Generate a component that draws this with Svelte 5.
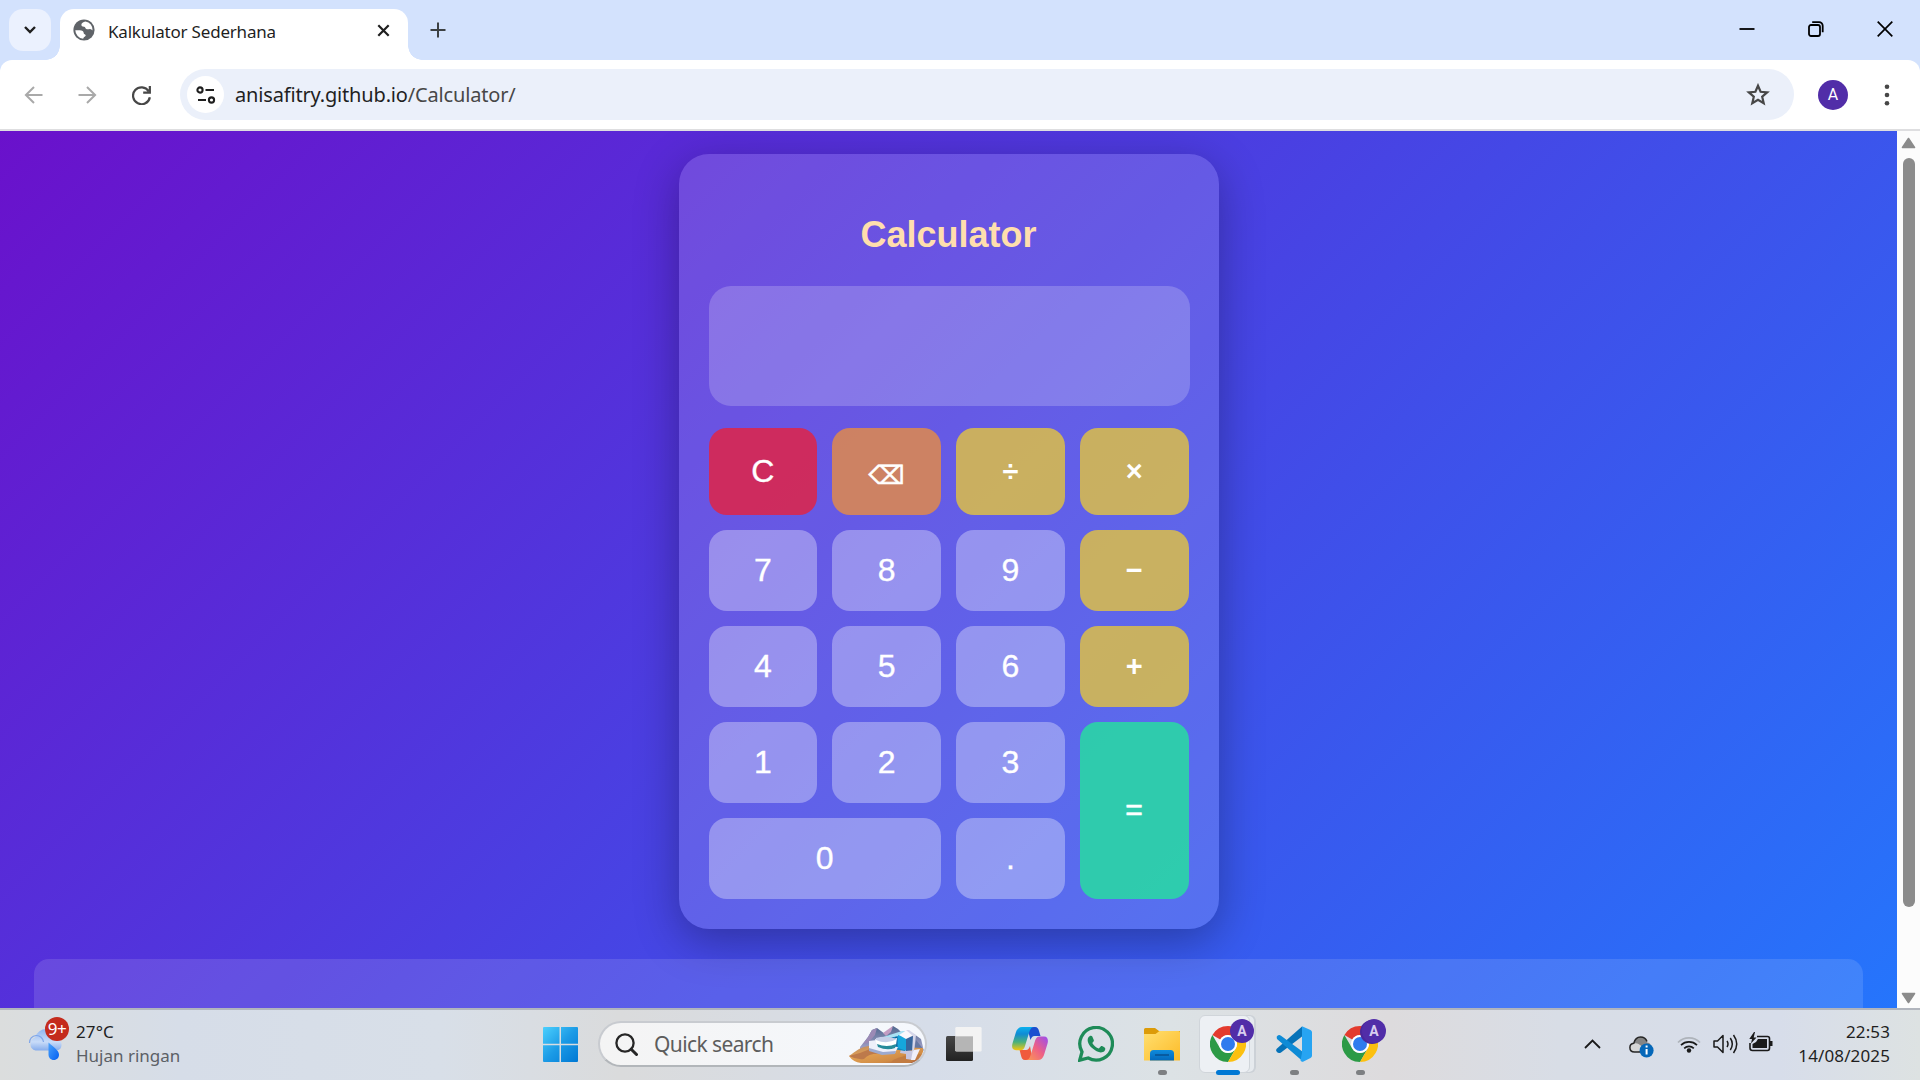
<script>
  const keys = [
    { label: 'C', kind: 'clear' },
    { label: '⌫', kind: 'erase' },
    { label: '÷', kind: 'op' },
    { label: '×', kind: 'op' },
    { label: '7' }, { label: '8' }, { label: '9' },
    { label: '−', kind: 'op' },
    { label: '4' }, { label: '5' }, { label: '6' },
    { label: '+', kind: 'op' },
    { label: '1' }, { label: '2' }, { label: '3' },
    { label: '=', kind: 'equals' },
    { label: '0', kind: 'zero' },
    { label: '.' }
  ];
</script>

{#snippet chrome()}
  <svg class="icon36" viewBox="0 0 36 36">
    <path d="M18 0A18 18 0 0 1 33.6 9H18A9 9 0 0 0 10.2 13.5L2.4 9A18 18 0 0 1 18 0Z" fill="#e33b2e" />
    <path d="M2.4 9A18 18 0 0 0 18 36L25.8 22.5A9 9 0 0 1 10.2 22.5Z" fill="#2c9a46" />
    <path d="M33.6 9A18 18 0 0 1 18 36L25.8 22.5A9 9 0 0 0 25.8 13.5L18 9Z" fill="#fcc010" />
    <circle cx="18" cy="18" r="9" fill="#fff" />
    <circle cx="18" cy="18" r="7" fill="#2f7bee" />
  </svg>
{/snippet}

<div class="screen">
  <header class="tabstrip">
    <div class="search-tabs">
      <svg width="14" height="10" viewBox="0 0 14 10"><path d="M2 2l5 5 5-5" fill="none" stroke="#1f1f1f" stroke-width="2.4" /></svg>
    </div>
    <div class="tab">
      <svg class="globe" width="22" height="22" viewBox="0 0 22 22">
        <circle cx="11" cy="11" r="10.6" fill="#5f6368" />
        <path d="M12.5 2.4C10 2.8 8.600 4 8.400 5.600c-.2 1.700 1 2 2.600 2.100 1.500.1 1.200 1.600 2.300 2.300 1.500.9 2.900-.2 4.300.2 1 .3 1.500.7 2 1.300A8.700 8.700 0 0 0 12.500 2.400Z" fill="#fff" />
        <path d="M2.300 11.200h4.500c2.400 0 4 1.200 4 3.200 0 1 1.900.6 1.900 1.900 0 1.500-2 1.200-2.500 3.400A8.800 8.800 0 0 1 2.300 11.200Z" fill="#fff" />
      </svg>
      <span class="tab-title">Kalkulator Sederhana</span>
      <svg class="tab-close" width="13" height="13" viewBox="0 0 13 13"><path d="M1.300 1.300l10.400 10.400M11.700 1.300L1.300 11.700" stroke="#1f1f1f" stroke-width="2.200" /></svg>
    </div>
    <svg class="plus" width="16" height="16" viewBox="0 0 16 16"><path d="M8 .5v15M.5 8h15" stroke="#3c4043" stroke-width="2" /></svg>
    <div class="window-controls">
      <svg width="16" height="16" viewBox="0 0 16 16"><path d="M.5 8h15" stroke="#000" stroke-width="1.800" /></svg>
      <svg width="16" height="16" viewBox="0 0 16 16"><rect x="1" y="4" width="11" height="11" rx="2" fill="none" stroke="#000" stroke-width="1.800" /><path d="M4.200 1.200H11a3.600 3.600 0 0 1 3.700 3.600v6.500" fill="none" stroke="#000" stroke-width="1.800" /></svg>
      <svg width="16" height="16" viewBox="0 0 16 16"><path d="M.7.7l14.600 14.600M15.300.7L.7 15.300" stroke="#000" stroke-width="1.700" /></svg>
    </div>
  </header>

  <div class="toolbar">
    <svg class="nav" width="19" height="18" viewBox="0 0 19 18"><path d="M18.500 9H2M10 1L1.900 9 10 17" fill="none" stroke="#a9a9a9" stroke-width="2" /></svg>
    <svg class="nav" width="19" height="18" viewBox="0 0 19 18"><path d="M.5 9H17M9 1l8.100 8L9 17" fill="none" stroke="#a9a9a9" stroke-width="2" /></svg>
    <svg class="nav" width="19" height="19" viewBox="0 0 18 18"><path d="M15.800 5A8 8 0 1 0 16.900 10.600M16.900 0v6.300H10.600" fill="none" stroke="#474747" stroke-width="2.100" /></svg>
    <div class="omnibox">
      <div class="site-info">
        <svg width="20" height="18" viewBox="0 0 20 18"><g fill="none" stroke="#1f1f1f" stroke-width="2.100"><circle cx="4" cy="4" r="2.600" /><path d="M9.500 4H18M2 14h8" /><circle cx="15.500" cy="14" r="2.600" /></g></svg>
      </div>
      <span class="url">anisafitry.github.io<span class="path">/Calculator/</span></span>
      <svg class="star" width="24" height="23" viewBox="0 0 24 23"><path d="M12 2.700l2.600 6.100 6.600.6-5 4.300 1.500 6.500L12 16.800l-5.700 3.400 1.500-6.500-5-4.300 6.600-.6z" fill="none" stroke="#474747" stroke-width="2.200" /></svg>
    </div>
    <div class="profile">A</div>
    <svg class="menu" width="6" height="22" viewBox="0 0 6 22"><g fill="#474747"><circle cx="3" cy="2.700" r="2.300" /><circle cx="3" cy="11" r="2.300" /><circle cx="3" cy="19.200" r="2.300" /></g></svg>
  </div>

  <div class="viewport">
    <main class="page">
      <section class="calculator">
        <h1>Calculator</h1>
        <div class="display"></div>
        <div class="keys">
          {#each keys as key}
            <button class={key.kind ?? 'digit'}>{#if key.kind === 'erase'}<span class="erase-glyph">{key.label}</span>{:else}{key.label}{/if}</button>
          {/each}
        </div>
      </section>
      <section class="history"></section>
    </main>
    <div class="scrollbar">
      <svg width="15" height="12" viewBox="0 0 15 12"><path d="M7.500 1.500L13.500 10.500H1.500Z" fill="#8b8b8b" stroke="#8b8b8b" stroke-width="1.600" stroke-linejoin="round" /></svg>
      <div class="thumb"></div>
      <svg width="15" height="12" viewBox="0 0 15 12"><path d="M7.500 10.500L13.500 1.500H1.500Z" fill="#8b8b8b" stroke="#8b8b8b" stroke-width="1.600" stroke-linejoin="round" /></svg>
    </div>
  </div>

  <footer class="taskbar">
    <div class="weather">
      <div class="weather-icon">
        <svg width="38" height="36" viewBox="0 0 38 36">
          <defs>
            <linearGradient id="cloud" x1="0" y1="0" x2="0" y2="1"><stop offset="0" stop-color="#8fb4ef" /><stop offset=".6" stop-color="#c9dcf8" /><stop offset="1" stop-color="#86acec" /></linearGradient>
            <linearGradient id="drop" x1="0" y1="0" x2="1" y2="1"><stop offset="0" stop-color="#4ba3fb" /><stop offset="1" stop-color="#0560f2" /></linearGradient>
          </defs>
          <path d="M7.500 25.500a6.800 6.800 0 0 1-.5-13A11.500 11.500 0 0 1 29.500 14a6 6 0 0 1-.5 11.500Z" fill="url(#cloud)" />
          <path d="M1.500 18a7 7 0 0 1 14-1" fill="none" stroke="#7fa6ea" stroke-width="1.200" />
          <path d="M20.500 17.500c5 4.500 10.500 8 10.500 12 0 3.200-2 5.500-5.200 5.500s-5.300-2.500-5.300-5.500Z" fill="url(#drop)" />
        </svg>
        <span class="count">9+</span>
      </div>
      <div class="weather-text"><span>27°C</span><span class="muted">Hujan ringan</span></div>
    </div>

    <div class="apps">
      <div class="app">
        <svg width="35" height="35" viewBox="0 0 35 35">
          <defs><linearGradient id="win" x1="0" y1="0" x2="1" y2="1" gradientUnits="objectBoundingBox"><stop offset="0" stop-color="#4cd0fd" /><stop offset=".5" stop-color="#1c9be6" /><stop offset="1" stop-color="#0078d4" /></linearGradient></defs>
          <path d="M1 0H16.500V16.700H0V1A1 1 0 0 1 1 0ZM18 0H34A1 1 0 0 1 35 1V16.700H18ZM0 18.200H16.500V35H1A1 1 0 0 1 0 34ZM18 18.200H35V34A1 1 0 0 1 34 35H18Z" fill="url(#win)" />
        </svg>
      </div>
      <div class="search">
        <svg width="23" height="23" viewBox="0 0 23 23"><circle cx="10" cy="10" r="8.600" fill="none" stroke="#262626" stroke-width="2.300" /><path d="M16.200 16.200L21.500 21.500" stroke="#262626" stroke-width="3" stroke-linecap="round" /></svg>
        <span>Quick search</span>
        <svg class="scene" width="75" height="38" viewBox="0 0 75 38">
          <defs>
            <linearGradient id="hills" x1="0" y1="0" x2="0" y2="1"><stop stop-color="#51688f" /><stop offset="1" stop-color="#a9a6cc" /></linearGradient>
            <linearGradient id="sand" x1="0" y1="0" x2="1" y2="1"><stop stop-color="#b88a6a" /><stop offset=".35" stop-color="#e0a052" /><stop offset=".7" stop-color="#d18c45" /><stop offset="1" stop-color="#9c5440" /></linearGradient>
          </defs>
          <path d="M11 21L19 11 23 4 28 2 36 8 44 0 49 3 53 7 65 8 72 13 75 25H11Z" fill="url(#hills)" />
          <path d="M19 11L23 4 28 2 26 9 19 17 14 18Z" fill="#9b8ab5" />
          <path d="M34 7L41 2 44 0 42 6 37 10Z" fill="#c39cc2" />
          <path d="M67 14L75 24 70 29 65 25Z" fill="#6678a2" />
          <path d="M0 30C7 25 11 21 20 20L74 22C75 31 70 35 63 37H12Q4 36 0 30Z" fill="url(#sand)" />
          <path d="M0 30Q10 28 21 23L32 28Q20 27 15 33 8 34 0 30Z" fill="#bd7a4b" />
          <path d="M44 34Q56 28 72 28 68 34 61 37H42Z" fill="#c27c42" />
          <path d="M52 23L64 25V34L57 33 57 28 51 27Z" fill="#c7c5df" />
          <path d="M64 24L71 23 66 34H62Z" fill="#f0eefa" />
          <path d="M29 13L52 7 56 8V25L44 23 30 15Z" fill="#1585bc" />
          <path d="M40 9.500v9M43.500 9v10M47 8v12" stroke="#0b5d95" stroke-width="1.500" />
          <path d="M28 13L53 5 60 5 54 9 31 14Z" fill="#a9e1f3" />
          <path d="M49 9L58 12V25L49 22Z" fill="#16a6dc" />
          <path d="M57 12L65 10V24L57 25Z" fill="#37669d" />
          <path d="M50 9L58 4 65 9 57 13Z" fill="#fbf8fc" />
          <path d="M57 4L60 4 67 9 65 25 63 26 64 10Z" fill="#d6d7ea" />
          <path d="M20 15L28 14 30 20 49 21 46 27 33 28 20 24Z" fill="#eef0fa" />
          <path d="M20 22L34 26 47 25 46 28 33 29 20 25Z" fill="#9daace" />
          <path d="M26 13Q37 17 48 12L47 19Q37 24 28 19Z" fill="#fff" />
          <path d="M27 12Q37 9 48 13 38 19 27 14Z" fill="#c6cfe7" />
          <path d="M28 18Q38 22 47 18L46 22Q38 25 29 21Z" fill="#278b9a" />
        </svg>
      </div>
      <div class="app">
        <svg class="icon36" viewBox="0 0 36 36"><defs><linearGradient id="tv" x2="0" y2="1"><stop stop-color="#464646" /><stop offset="1" stop-color="#222" /></linearGradient></defs><rect y="10" width="27" height="25" rx="1.500" fill="url(#tv)" /><rect x="9.300" y="1" width="26.300" height="24.500" rx="1.200" fill="#f3f3f3" /><path d="M9.300 10.300H27V25H9.300Z" fill="#b5b5b5" /></svg>
      </div>
      <div class="app">
        <svg class="icon36" viewBox="0 0 36 36">
          <defs>
            <linearGradient id="cpA" x1="0" y1="0" x2="0" y2="1"><stop stop-color="#0bb1ee" /><stop offset=".3" stop-color="#0f8bd5" /><stop offset=".65" stop-color="#4bb17b" /><stop offset="1" stop-color="#f5c60f" /></linearGradient>
            <linearGradient id="cpB" x1="1" y1="0" x2="0" y2="1"><stop stop-color="#9a4cf0" /><stop offset=".5" stop-color="#ee6085" /><stop offset="1" stop-color="#fb9d50" /></linearGradient>
          </defs>
          <path d="M15 1h8c2.500 0 3.500 2 4 4l1.500 5h-6c-2 0-3 1.500-4 4Z" fill="#1b4fd0" />
          <path d="M20.500 34H13c-2.500 0-3.500-2-4-4.500L7.600 24H14c2 0 3-1.500 4-4Z" fill="#f05a3c" />
          <path d="M10 1h12c-3 0-4 3-5 6l-4 13c-1 3-2 4.200-4.500 4.200H4C0 24.200-.5 20.500.6 17L4 6C5 3 7 1 10 1Z" fill="url(#cpA)" />
          <path d="M26 34H14c3 0 4-3 5-6l4-13c1-3 2-4.500 4.500-4.500H32c4 0 4.500 4 3.400 7.500L32 29c-1 3-3 5-6 5Z" fill="url(#cpB)" />
        </svg>
      </div>
      <div class="app">
        <svg class="icon36" viewBox="0 0 36 36"><path d="M1.700 34.200L4 25.900A16.300 16.300 0 1 1 10.200 32Z" fill="none" stroke="#1e8b58" stroke-width="3.300" /><path d="M10.300 11.500c1.300-2 3.300-2.300 4-1l1.500 3.400c.3.800-.1 1.500-1.500 3 1.700 3 3.900 4.700 6.500 5.700l1.900-2.200c.6-.7 1.400-.3 3.900 1.100 1.400.8.600 3.800-1.700 4.600-3 1.200-6.900-.5-10.800-4-4.200-3.900-5.300-8.100-3.800-10.600Z" fill="#1e8b58" /></svg>
      </div>
      <div class="app running">
        <svg class="icon36" viewBox="0 0 36 36"><defs><linearGradient id="fold" x1="0" y1="0" x2="1" y2="1"><stop stop-color="#ffdf70" /><stop offset="1" stop-color="#fdbb28" /></linearGradient><linearGradient id="pocket" x2="0" y2="1"><stop stop-color="#0e8bdd" /><stop offset="1" stop-color="#0469bc" /></linearGradient></defs><path d="M0 3.500A1.500 1.500 0 0 1 1.500 2H11l4 3H36V12H0Z" fill="#dc9b09" /><path d="M0 8h11.500l4-3H34.500A1.500 1.500 0 0 1 36 6.500V34.500H0Z" fill="url(#fold)" /><path d="M6 34.500V27.500A3.500 3.500 0 0 1 9.500 24h17A3.500 3.500 0 0 1 30 27.500v7Z" fill="url(#pocket)" /><path d="M11 29H25" stroke="#08579b" stroke-width="1.800" /></svg>
      </div>
      <div class="app active">{@render chrome()}<span class="badge">A</span></div>
      <div class="app running">
        <svg class="icon36" viewBox="0 0 36 36"><path d="M1 22.500L26 .5v10L5 26.500Q2.500 28 .6 25.500Q-.5 24 1 22.500Z" fill="#0672b8" /><path d="M1 13L.8 12Q.2 10.500 1.500 9.700Q3 8.500 5 9.700L27 26v9.500Z" fill="#0e8bd6" /><path d="M26 .3L34.500 4Q36 4.800 36 6.300V29.700Q36 31.200 34.500 32L27 35.700Q25.500 36 24.500 34.500L26 27Z" fill="#27a4f2" /></svg>
      </div>
      <div class="app running">{@render chrome()}<span class="badge doubled">A</span></div>
    </div>

    <div class="tray">
      <svg width="17" height="10" viewBox="0 0 17 10"><path d="M1 9l7.500-7.500L16 9" fill="none" stroke="#1a1a1a" stroke-width="1.800" /></svg>
      <svg class="onedrive" width="25" height="22" viewBox="0 0 25 22"><path d="M5.500 16C2 16 .9 13.800.9 11.500.9 9 2.700 7.500 4.800 7.200 6 2.500 8.500 1 11.500 1c4 0 6 2.500 6.500 5.500 2 0 4 1.500 4 4V16Z" fill="#858585" /><path d="M4.800 7.500c3.500-1 5 .5 7 2l5 3-8 3.500H5.500C2 16 .9 13.800.9 11.500.9 9 2.700 7.800 4.800 7.500Z" fill="#d6d6d6" /><path d="M11 16H5.500C2 16 .9 13.800.9 11.500.9 9 2.700 7.500 4.800 7.200 6 2.500 8.500 1 11.500 1c3.500 0 5.500 1.800 6.500 4.500" fill="none" stroke="#262626" stroke-width="1.500" /><circle cx="17.600" cy="14.500" r="7" fill="#0567b9" /><path d="M17.600 13v5.500M17.600 9.500v2" stroke="#fff" stroke-width="2" /></svg>
      <svg class="wifi" width="24" height="18" viewBox="0 0 24 18"><g fill="none" stroke-width="1.700"><path d="M1 7.500A15.500 15.500 0 0 1 23 7.500" stroke="#aeb3ba" /><path d="M4 10.200a11.500 11.500 0 0 1 16 0M7.200 13.300a7 7 0 0 1 9.600 0" stroke="#1a1a1a" /></g><circle cx="12" cy="15.500" r="2.200" fill="#1a1a1a" /></svg>
      <svg class="volume" width="25" height="20" viewBox="0 0 25 20"><g fill="none" stroke="#1a1a1a" stroke-width="1.500" stroke-linejoin="round"><path d="M1 7H4.500L10 1.500V18.500L4.500 13H1Z" /><path d="M14 7q2 3 0 6M17.300 4q4 6 0 12M20.500 1q6.500 9 0 18" /></g></svg>
      <svg class="battery" width="24" height="20" viewBox="0 0 24 20"><path d="M8 4.500H18.500Q20.500 4.500 20.500 6.500V16Q20.500 18.500 18.500 18.500H3.500Q1 18.500 1 16V11" fill="none" stroke="#1a1a1a" stroke-width="1.600" /><path d="M9 7H18V16H3.500V12L7 10Z" fill="#1a1a1a" /><path d="M21 9h2.500v5H21Z" fill="#1a1a1a" /><path d="M5 0L.3 7H3L2 11.500 7.500 5.500H4.700L6 0Z" fill="#1a1a1a" /></svg>
      <div class="clock"><span>22:53</span><span>14/08/2025</span></div>
    </div>
  </footer>
</div>

<style>
  .screen {
    width: 1920px;
    height: 1080px;
    display: flex;
    flex-direction: column;
    overflow: hidden;
    font-family: "Noto Sans", "Open Sans", sans-serif;
    color: #1f1f1f;
    background: #d3e2fd;
  }
  svg { display: block; flex: none; }
  span { white-space: nowrap; }

  .tabstrip { height: 60px; display: flex; align-items: flex-start; box-sizing: border-box; padding: 9px 24px 0 9px; }
  .search-tabs { width: 42px; height: 42px; border-radius: 14px; background: #ebf1fe; display: flex; align-items: center; justify-content: center; }
  .tab { position: relative; margin-left: 9px; width: 348px; height: 51px; background: #fff; border-radius: 14px 14px 0 0; display: flex; box-sizing: border-box; padding: 10px 18px 0 13px; }
  .tab::before, .tab::after { content: ''; position: absolute; bottom: 0; width: 14px; height: 14px; }
  .tab::before { left: -14px; background: radial-gradient(circle at 0 0, transparent 13.5px, #fff 14px); }
  .tab::after { right: -14px; background: radial-gradient(circle at 100% 0, transparent 13.5px, #fff 14px); }
  .tab-title { margin-left: 13px; font-size: 17px; line-height: 25px; letter-spacing: -0.2px; }
  .tab-close { margin: 5px 0 0 auto; }
  .plus { margin: 13px 0 0 22px; }
  .window-controls { margin: 12px 0 0 auto; display: flex; gap: 53px; padding-right: 3px; }

  .toolbar { height: 71px; flex: none; background: #fff; border-radius: 12px 12px 0 0; display: flex; align-items: center; box-sizing: border-box; padding: 1px 30px 0 24px; border-bottom: 2px solid #dedee0; }
  .nav { margin-right: 35px; }
  .nav + .nav + .nav { margin-right: 29px; }
  .omnibox { flex: 1; height: 51px; border-radius: 26px; background: #ebf0fa; display: flex; align-items: center; box-sizing: border-box; padding: 0 24px 0 7px; margin-top: -1px; }
  .site-info { width: 37px; height: 37px; border-radius: 50%; background: #fff; display: flex; align-items: center; justify-content: center; }
  .url { margin-left: 11px; font-size: 20px; line-height: 28px; letter-spacing: -0.17px; }
  .path { color: #474747; }
  .star { margin-left: auto; }
  .profile { width: 30px; height: 30px; margin: 0 36px 0 24px; border-radius: 50%; background: #512da8; color: #fff; font: 16px/30px Roboto, sans-serif; text-align: center; }

  .viewport { height: 877px; flex: none; display: flex; overflow: hidden; background: #fcfcfc; }
  .page { width: 1897px; height: 877px; display: flex; flex-direction: column; align-items: center; overflow: hidden; box-sizing: border-box; padding-top: 23px; background: linear-gradient(135deg, #6a11cb, #2575fc); }
  .calculator { width: 540px; height: 775px; flex: none; box-sizing: border-box; padding: 61px 30px 30px; border-radius: 30px; background: rgba(255, 255, 255, 0.15); box-shadow: 0 12px 45px rgba(0, 0, 0, 0.3); font-family: "Liberation Sans", Arial, sans-serif; }
  h1 { margin: 0 0 31px; height: 40px; font-size: 36px; line-height: 40px; text-align: center; color: #ffdead; }
  .display { height: 120px; margin-right: -1px; border-radius: 22px; background: rgba(255, 255, 255, 0.2); }
  .keys { margin-top: 22px; display: grid; grid-template-columns: repeat(4, 1fr); grid-template-rows: 87px repeat(4, 81px); gap: 15px; }
  button { border: 0; padding: 0 0 1px; border-radius: 18px; color: #fff; font: 32px/1 "Liberation Sans", Arial, sans-serif; -webkit-text-stroke: 0.35px #fff; background: rgba(255, 255, 255, 0.33); }
  .clear { background: rgba(220, 38, 75, 0.88); }
  .erase { background: rgba(226, 138, 72, 0.83); padding: 2px 0 0; }
  .erase-glyph { font: 25.5px/1 "DejaVu Sans", sans-serif; -webkit-text-stroke: 0.6px #fff; }
  .op { background: rgba(222, 192, 69, 0.83); font-size: 29px; font-weight: bold; -webkit-text-stroke: 0; }
  .equals { grid-row: span 2; background: rgba(38, 222, 160, 0.83); padding-bottom: 1px; font-size: 30px; -webkit-text-stroke: 0.6px #fff; }
  .zero { grid-column: span 2; }
  .history { margin-top: 30px; width: 1829px; height: 100px; flex: none; border-radius: 15px; background: rgba(255, 255, 255, 0.12); }
  .scrollbar { width: 23px; display: flex; flex-direction: column; align-items: center; box-sizing: border-box; padding: 6px 0 4px; }
  .thumb { width: 12px; height: 749px; margin: 9px 0 auto; border-radius: 6px; background: #8b8b8b; }

  .taskbar { height: 72px; flex: none; display: grid; grid-template-columns: 527px 880px 1fr; box-sizing: border-box; border-top: 2px solid #b1b5bd; background: linear-gradient(90deg, #dbdddd 0, #d6dde8 180px, #d8dfe8 440px, #dadbdc 620px, #d6dde9 930px, #dce2e5 1170px, #dddbdd 1390px, #d8dde6 1560px, #d7ddea 1780px, #dde2e2 1920px); }
  .weather { display: flex; padding-left: 28px; }
  .weather-icon { position: relative; width: 38px; height: 36px; margin-top: 15px; }
  .count { position: absolute; left: 17px; top: -8px; width: 24px; height: 24px; border-radius: 50%; background: #c42b1c; color: #fff; font-size: 17px; line-height: 24px; letter-spacing: -0.5px; text-align: center; }
  .weather-text { display: flex; flex-direction: column; margin: 10px 0 0 10px; font-size: 17px; line-height: 24px; letter-spacing: 0.1px; }
  .muted { color: #5c6066; letter-spacing: 0; }

  .apps { display: flex; align-items: flex-start; }
  .app { position: relative; width: 66px; height: 68px; display: flex; align-items: center; justify-content: center; }
  .icon36 { width: 36px; height: 36px; }
  .search { width: 329px; height: 46px; margin: 11px 4px 0 5px; display: flex; align-items: center; box-sizing: border-box; padding: 0 1px 0 15px; border: 2px solid #c8cbd0; border-bottom-color: #b2b6ba; border-radius: 23px; background: linear-gradient(90deg, #f4f4f4, #f5f8fd); font-size: 21px; letter-spacing: -0.6px; color: #5d5d5d; }
  .search span { margin: 0 0 1px 16px; }
  .scene { margin: 2px 0 0 auto; border-radius: 0 18px 18px 0; }
  .running::after { content: ''; position: absolute; left: 29px; bottom: 3px; width: 9px; height: 5px; border-radius: 3px; background: #7d7f82; }
  .active::before { content: ''; position: absolute; left: 4px; top: 5px; width: 49px; height: 56px; border: 1px solid #d0d5da; border-radius: 6px; background: #edf0f4; box-shadow: 5px 0 0 -1px #e6eaee, 6px 0 0 0 #ccd1d7; }
  .active::after { content: ''; position: absolute; left: 21px; bottom: 3px; width: 24px; height: 5px; border-radius: 3px; background: #0078d4; }
  .app svg { position: relative; }
  .badge { position: absolute; left: 35px; top: 9px; width: 24px; height: 24px; border-radius: 50%; background: #512da8; color: #d9cdf0; font: bold 14px/24px Roboto, sans-serif; text-align: center; }
  .doubled { box-shadow: -2px 1px 0 #4a289c; }

  .tray { display: flex; align-items: center; padding: 0 30px 2px 177px; }
  .onedrive { margin: 6px 0 0 28px; }
  .wifi { margin-left: 23px; }
  .volume { margin-left: 12px; }
  .battery { margin: 0 0 4px 11px; }
  .clock { margin: 0 0 1px auto; display: flex; flex-direction: column; align-items: flex-end; font-size: 17px; line-height: 24px; letter-spacing: 0.12px; }
</style>
